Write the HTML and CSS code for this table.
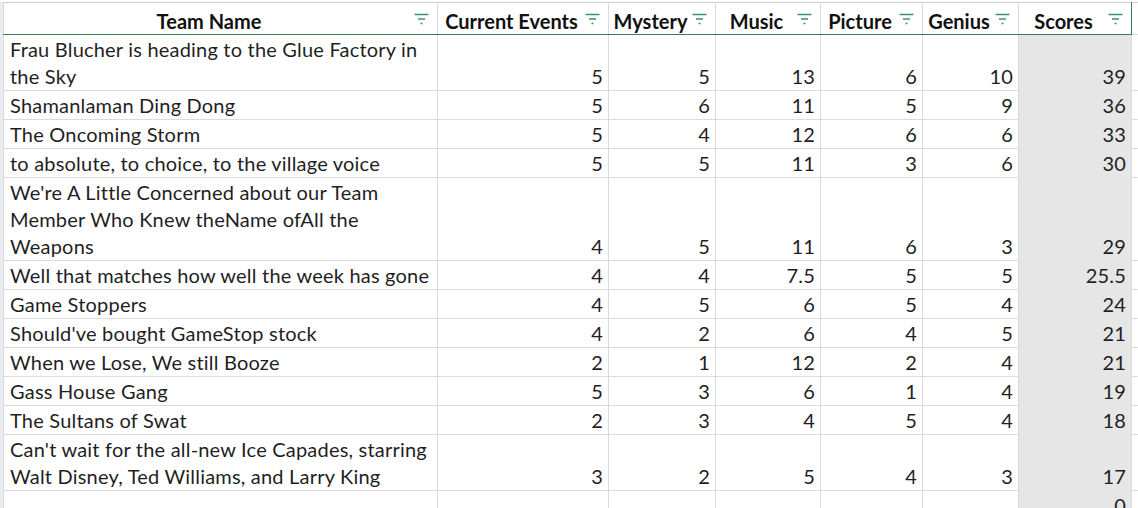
FILE: index.html
```html
<!DOCTYPE html>
<html>
<head>
<meta charset="utf-8">
<link rel="stylesheet" href="styles.css">
</head>
<body>
<div class="sheet">
  <div class="gutter"></div>
  <table class="grid">
    <colgroup>
      <col class="c-team"><col class="c-ce"><col class="c-my"><col class="c-mu"><col class="c-pi"><col class="c-ge"><col class="c-sc"><col class="c-x">
    </colgroup>
    <thead>
      <tr>
        <th><div class="hd"><span class="lbl">Team Name</span><svg class="flt" viewBox="0 0 14 12"><path d="M0 1.5H14M3.5 6H10.5M6 10.5H8"/></svg></div></th>
        <th><div class="hd"><span class="lbl">Current Events</span><svg class="flt" viewBox="0 0 14 12"><path d="M0 1.5H14M3.5 6H10.5M6 10.5H8"/></svg></div></th>
        <th><div class="hd"><span class="lbl">Mystery</span><svg class="flt" viewBox="0 0 14 12"><path d="M0 1.5H14M3.5 6H10.5M6 10.5H8"/></svg></div></th>
        <th><div class="hd"><span class="lbl">Music</span><svg class="flt" viewBox="0 0 14 12"><path d="M0 1.5H14M3.5 6H10.5M6 10.5H8"/></svg></div></th>
        <th><div class="hd"><span class="lbl">Picture</span><svg class="flt" viewBox="0 0 14 12"><path d="M0 1.5H14M3.5 6H10.5M6 10.5H8"/></svg></div></th>
        <th><div class="hd"><span class="lbl">Genius</span><svg class="flt" viewBox="0 0 14 12"><path d="M0 1.5H14M3.5 6H10.5M6 10.5H8"/></svg></div></th>
        <th class="last"><div class="hd"><span class="lbl">Scores</span><svg class="flt" viewBox="0 0 14 12"><path d="M0 1.5H14M3.5 6H10.5M6 10.5H8"/></svg></div></th>
        <th class="blank"></th>
      </tr>
    </thead>
    <tbody>
      <tr><td class="t">Frau Blucher is heading to the Glue Factory in<br>the Sky</td><td class="n">5</td><td class="n">5</td><td class="n">13</td><td class="n">6</td><td class="n">10</td><td class="n s">39</td><td></td></tr>
      <tr><td class="t">Shamanlaman Ding Dong</td><td class="n">5</td><td class="n">6</td><td class="n">11</td><td class="n">5</td><td class="n">9</td><td class="n s">36</td><td></td></tr>
      <tr><td class="t">The Oncoming Storm</td><td class="n">5</td><td class="n">4</td><td class="n">12</td><td class="n">6</td><td class="n">6</td><td class="n s">33</td><td></td></tr>
      <tr><td class="t">to absolute, to choice, to the village voice</td><td class="n">5</td><td class="n">5</td><td class="n">11</td><td class="n">3</td><td class="n">6</td><td class="n s">30</td><td></td></tr>
      <tr><td class="t">We're A Little Concerned about our Team<br>Member Who Knew theName ofAll the<br>Weapons</td><td class="n">4</td><td class="n">5</td><td class="n">11</td><td class="n">6</td><td class="n">3</td><td class="n s">29</td><td></td></tr>
      <tr><td class="t">Well that matches how well the week has gone</td><td class="n">4</td><td class="n">4</td><td class="n">7.5</td><td class="n">5</td><td class="n">5</td><td class="n s">25.5</td><td></td></tr>
      <tr><td class="t">Game Stoppers</td><td class="n">4</td><td class="n">5</td><td class="n">6</td><td class="n">5</td><td class="n">4</td><td class="n s">24</td><td></td></tr>
      <tr><td class="t">Should've bought GameStop stock</td><td class="n">4</td><td class="n">2</td><td class="n">6</td><td class="n">4</td><td class="n">5</td><td class="n s">21</td><td></td></tr>
      <tr><td class="t">When we Lose, We still Booze</td><td class="n">2</td><td class="n">1</td><td class="n">12</td><td class="n">2</td><td class="n">4</td><td class="n s">21</td><td></td></tr>
      <tr><td class="t">Gass House Gang</td><td class="n">5</td><td class="n">3</td><td class="n">6</td><td class="n">1</td><td class="n">4</td><td class="n s">19</td><td></td></tr>
      <tr><td class="t">The Sultans of Swat</td><td class="n">2</td><td class="n">3</td><td class="n">4</td><td class="n">5</td><td class="n">4</td><td class="n s">18</td><td></td></tr>
      <tr><td class="t">Can't wait for the all-new Ice Capades, starring<br>Walt Disney, Ted Williams, and Larry King</td><td class="n">3</td><td class="n">2</td><td class="n">5</td><td class="n">4</td><td class="n">3</td><td class="n s">17</td><td></td></tr>
      <tr><td class="t"></td><td class="n"></td><td class="n"></td><td class="n"></td><td class="n"></td><td class="n"></td><td class="n s">0</td><td></td></tr>
    </tbody>
  </table>
</div>
</body>
</html>
```
FILE: styles.css
```css
html, body {
  margin: 0;
  padding: 0;
  background: #ffffff;
  overflow: hidden;
}
body {
  width: 1138px;
  height: 508px;
  font-family: Lato, "Liberation Sans", sans-serif;
  color: #1f1f1f;
}
.sheet {
  display: flex;
  align-items: flex-start;
  padding-top: 2px;
}
.gutter {
  flex: 0 0 3px;
  align-self: stretch;
  background: #e9ecef;
}
.grid {
  border-collapse: collapse;
  table-layout: fixed;
  width: 1200px;
  flex: 0 0 auto;
  font-size: 20px;
  letter-spacing: 0.2px;
}
.c-team { width: 434px; }
.c-ce { width: 171px; }
.c-my { width: 107px; }
.c-mu { width: 105px; }
.c-pi { width: 102px; }
.c-ge { width: 96px; }
.c-sc { width: 113px; }
.c-x { width: 72px; }

th, td {
  border: 1px solid #dadada;
  line-height: 27px;
  padding: 1px 0 0 0;
  vertical-align: bottom;
  white-space: nowrap;
}
th {
  height: 31px;
  padding: 0;
  font-weight: 700;
  letter-spacing: 0;
  color: #111;
  border-bottom: 1px solid #2f8051;
  vertical-align: middle;
  border-top-color: #cfcfcf;
}
th.last {
  border-right: 1px solid #2f8051;
}
th.blank {
  border-bottom-color: #dadada;
}
.hd {
  display: flex;
  align-items: center;
  height: 31px;
}
.lbl {
  flex: 1 1 auto;
  text-align: center;
  white-space: nowrap;
  padding-top: 6px;
}
.flt {
  flex: 0 0 15px;
  width: 15px;
  height: 12px;
  margin: 1px 8px 0 0;
  fill: none;
  stroke: #3a9460;
  stroke-width: 1.5;
}
td.t {
  padding-left: 6px;
  text-align: left;
}
td.n {
  padding-right: 5px;
  text-align: right;
}
td.s {
  background: #e7e6e6;
  border-top-color: #e7e6e6;
  border-bottom-color: #e7e6e6;
}
```
